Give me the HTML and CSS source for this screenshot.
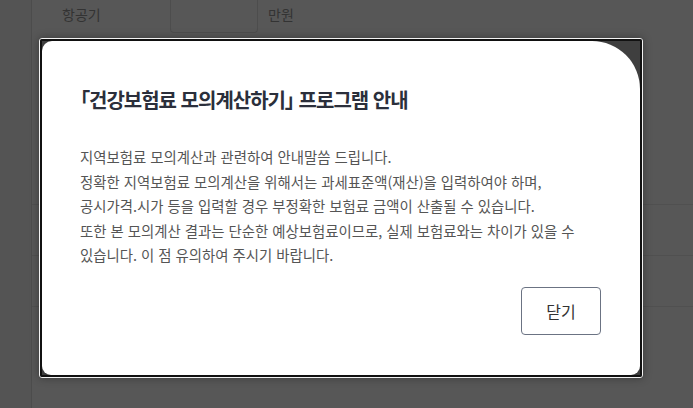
FILE: index.html
```html
<!DOCTYPE html>
<html lang="ko">
<head>
<meta charset="utf-8">
<link rel="stylesheet" href="styles.css">
</head>
<body>
<div class="page">
  <div class="side"></div>
  <div class="main">
    <div class="row first">
      <div class="label">항공기</div>
      <div class="input"></div>
      <div class="unit">만원</div>
    </div>
    <div class="row r2"></div>
    <div class="row r3"></div>
    <div class="row r4"></div>
    <div class="row r5"></div>
  </div>
</div>

<div class="modal">
  <div class="frame">
    <div class="content">
      <h2 class="title">「건강보험료 모의계산하기」 프로그램 안내</h2>
      <p class="body">지역보험료 모의계산과 관련하여 안내말씀 드립니다.<br>정확한 지역보험료 모의계산을 위해서는 과세표준액(재산)을 입력하여야 하며,<br>공시가격.시가 등을 입력할 경우 부정확한 보험료 금액이 산출될 수 있습니다.<br>또한 본 모의계산 결과는 단순한 예상보험료이므로, 실제 보험료와는 차이가 있을 수 있습니다. 이 점 유의하여 주시기 바랍니다.</p>
      <div class="actions">
        <button class="close">닫기</button>
      </div>
    </div>
  </div>
</div>
</body>
</html>
```

FILE: styles.css
```css
html, body {
  margin: 0;
  padding: 0;
}
body {
  width: 693px;
  height: 408px;
  overflow: hidden;
  background: #555555;
  font-family: "Noto Sans CJK KR", "Noto Sans", sans-serif;
}
.page {
  display: flex;
  height: 408px;
}
.side {
  width: 31px;
  background: #545454;
}
.main {
  flex: 1;
  border-left: 1px solid #4c4c4c;
  background: #575757;
}
.row {
  border-bottom: 1px solid #505050;
}
.row.first {
  display: flex;
  align-items: flex-start;
  height: 35px;
  border-bottom: none;
}
.label {
  width: 108px;
  padding-left: 30px;
  font-size: 14px;
  line-height: 28px;
  color: #333333;
}
.input {
  width: 88px;
  height: 34px;
  margin-top: -1px;
  border: 1px solid #4d4d4d;
  border-top: none;
  border-radius: 0 0 4px 4px;
  box-sizing: border-box;
}
.unit {
  padding-left: 10px;
  font-size: 14px;
  line-height: 28px;
  color: #333333;
}
.row.r2 { height: 169px; }
.row.r3 { height: 50px; }
.row.r4 { height: 50px; }
.row.r5 { height: 50px; border-bottom: none; }

.modal {
  position: absolute;
  left: 39px;
  top: 38px;
  width: 604px;
  height: 340px;
  box-sizing: border-box;
  border: 1px solid #f2f2f2;
  border-radius: 3px;
  box-shadow: 0 0 8px rgba(0, 0, 0, 0.35);
}
.frame {
  height: 100%;
  box-sizing: border-box;
  border: 2px solid #111111;
  border-radius: 2px;
  background: #3f3f3f;
}
.content {
  height: 100%;
  box-sizing: border-box;
  background: #ffffff;
  border-radius: 10px 48px 9px 9px;
  padding: 44px 38px 40px 38px;
  display: flex;
  flex-direction: column;
}
.title {
  margin: 0;
  font-size: 20px;
  font-weight: 700;
  line-height: 30px;
  color: #2b2f3b;
  letter-spacing: -1px;
  font-feature-settings: "palt";
}
.body {
  margin: 30px 0 0 0;
  font-size: 14.4px;
  line-height: 24.5px;
  color: #555555;
  word-break: keep-all;
}
.actions {
  margin-top: auto;
  display: flex;
  justify-content: flex-end;
}
.close {
  width: 80px;
  height: 48px;
  margin-right: 1px;
  border: 1px solid #6b7383;
  border-radius: 4px;
  background: #ffffff;
  font-family: "Noto Sans CJK KR", "Noto Sans", sans-serif;
  font-size: 16px;
  color: #333333;
  padding: 0;
}
```
